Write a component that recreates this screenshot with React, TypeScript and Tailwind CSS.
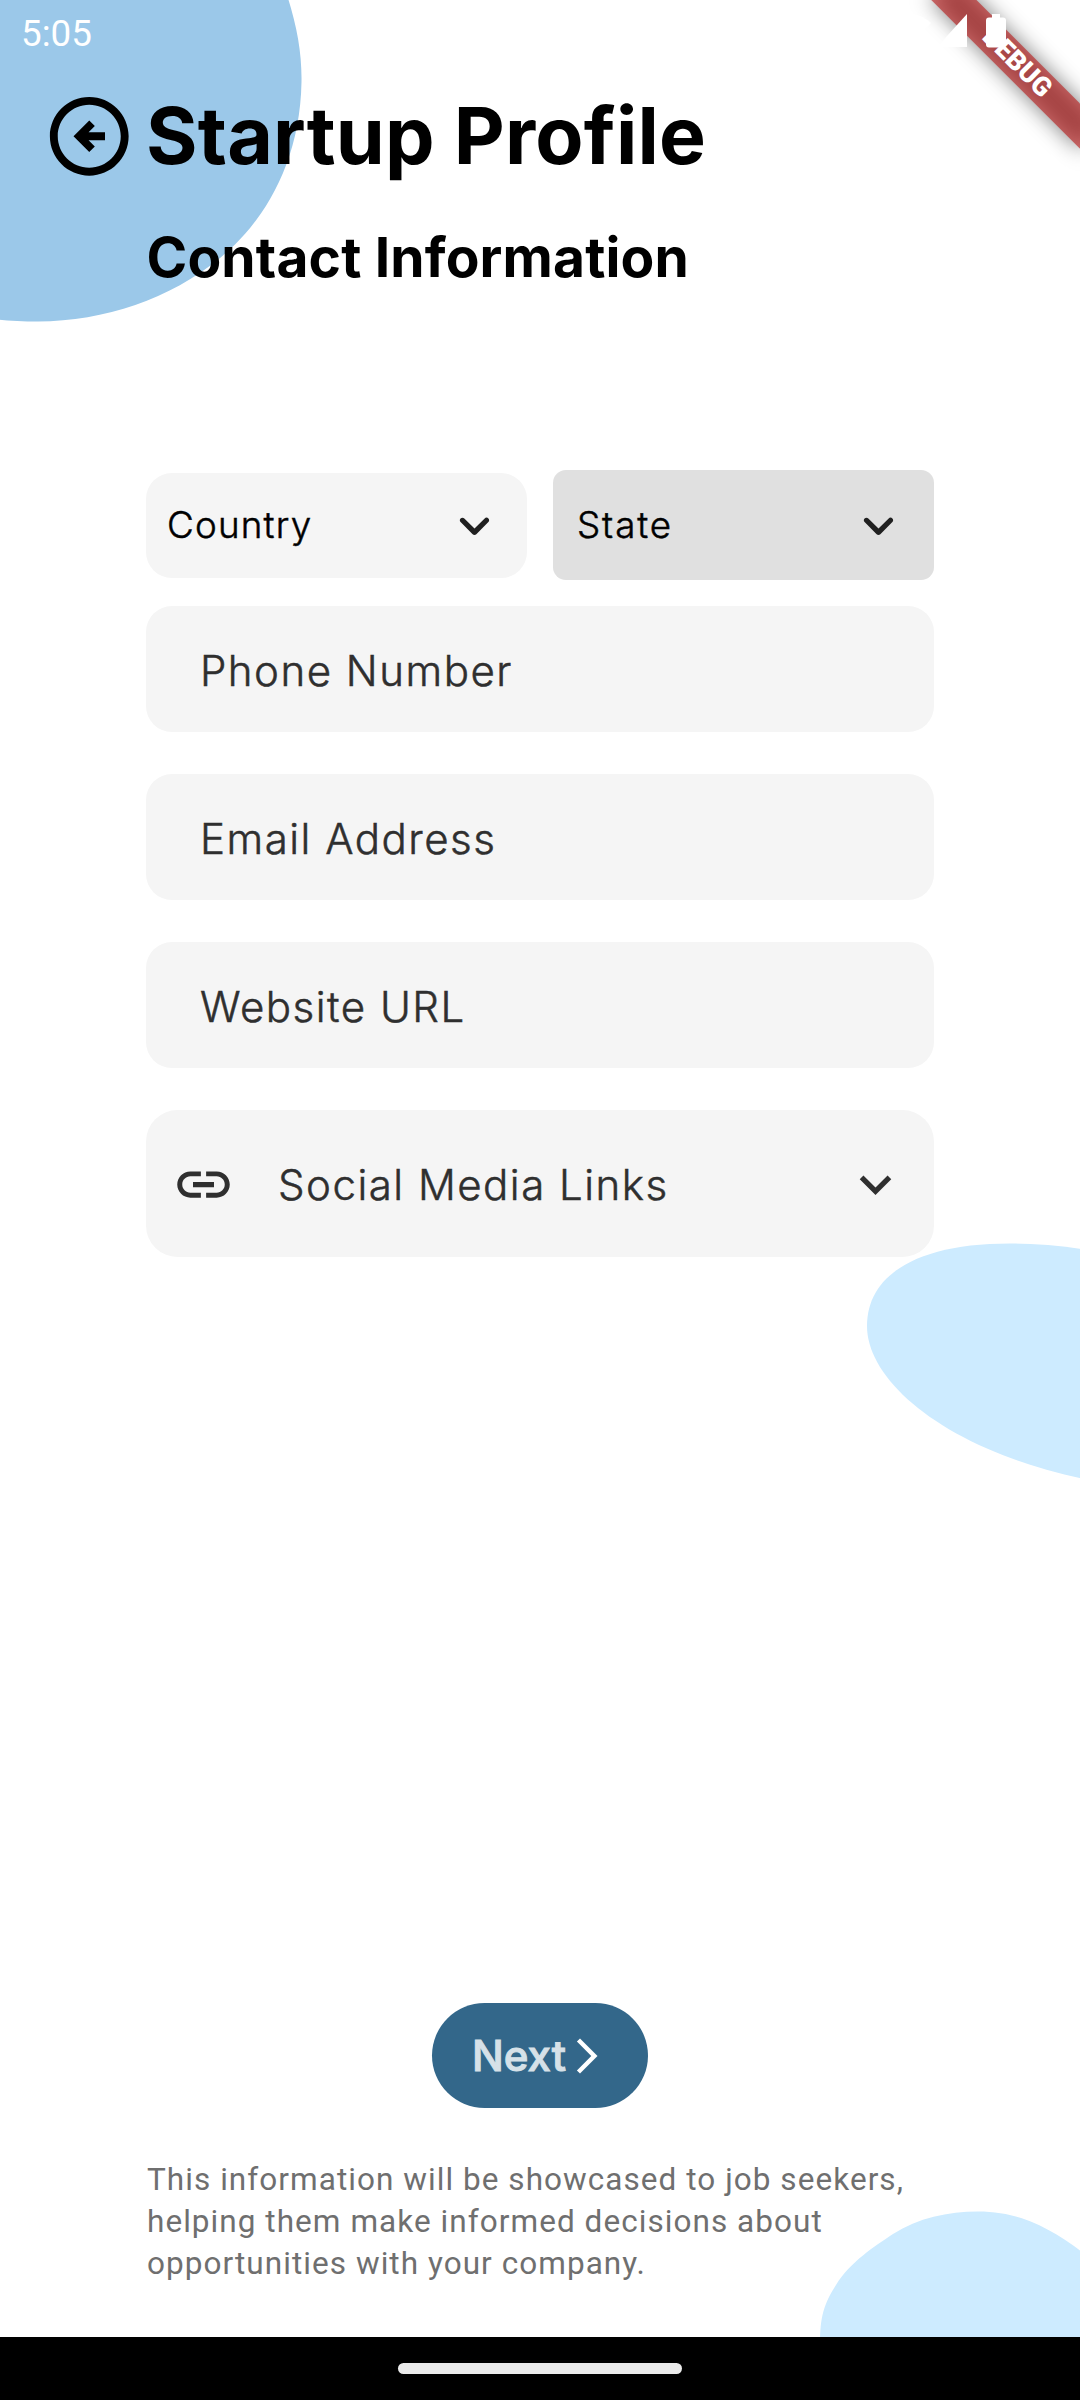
import type { ReactNode } from "react";

function BackgroundShapes() {
  return (
    <svg
      className="pointer-events-none absolute inset-0 h-[2400px] w-[1080px]"
      viewBox="0 0 1080 2400"
      aria-hidden="true"
    >
      <g className="blur-[0.7px]">
        <path
          fill="#9bc8e9"
          d="M-20 -20 H282 C296 20 302 50 301.5 82 C300 165 262 224 220 258 C170 299 105 321 38 321.5 C18 321.5 0 320.5 -20 317 Z"
        />
        <path
          fill="#cdebff"
          d="M1100 1252 C1070 1246.500 1040 1243.500 1010 1243.500 C915 1243.500 867 1276 867 1326 C867 1385 955 1456 1100 1482 Z"
        />
        <path
          fill="#cdebff"
          d="M820 2345 C820 2316 824 2304 836 2285 C850 2262 875 2246 893 2234 C918 2218 948 2211.500 978 2211.500 C1024 2211.500 1057 2231 1100 2266 V2345 Z"
        />
      </g>
    </svg>
  );
}

function DebugBanner() {
  return (
    <div className="pointer-events-none absolute top-0 right-0 h-[240px] w-[240px] overflow-hidden">
      <div className="absolute top-[47px] left-[72px] h-[31.500px] w-[210px] rotate-45">
        <div className="absolute inset-0 bg-black/50 blur-[10.400px]" />
        <div className="absolute inset-0 flex items-center justify-center bg-[#b71c1c]/63">
          <span className="font-[Roboto,sans-serif] text-[26.775px] leading-none font-black text-white">
            DEBUG
          </span>
        </div>
      </div>
    </div>
  );
}

function StatusBar() {
  return (
    <div className="absolute inset-x-0 top-0 h-[63px] text-white">
      <span className="absolute top-[12px] left-[21px] font-[Roboto,sans-serif] text-[36.750px] leading-[43px]">
        5:05
      </span>
      <svg className="absolute top-0 right-0 h-[63px] w-[200px]" viewBox="880 0 200 63" fill="currentColor">
        <path d="M909 47 L887 21 C900 11 918 11 931 23 Z" />
        <path d="M967 14 V47 H937 Z" />
        <path d="M992 14 h8 v3.500 h3 a3 3 0 0 1 3 3 v24 a3 3 0 0 1 -3 3 h-14 a3 3 0 0 1 -3 -3 v-24 a3 3 0 0 1 3 -3 h3 z" />
      </svg>
    </div>
  );
}

function RoundedChevron() {
  return (
    <svg className="size-[63px] shrink-0" viewBox="0 0 24 24" fill="#202020">
      <path d="M8.120 9.290 12 13.170l3.880-3.880c.39-.39 1.020-.39 1.410 0 .39.39.39 1.020 0 1.410l-4.590 4.590c-.39.39-1.020.39-1.410 0L6.700 10.700c-.39-.39-.39-1.020 0-1.410.39-.38 1.030-.39 1.420 0z" />
    </svg>
  );
}

function Field({ children }: { children: ReactNode }) {
  return (
    <div className="flex h-[126px] items-center rounded-[26px] bg-[#f5f5f5] pt-[3px] pl-[54px] text-[42px] font-light tracking-[1.500px] text-[#2f2f2f] [-webkit-text-stroke:0.500px_#2f2f2f]">
      {children}
    </div>
  );
}

export default function App() {
  return (
    <div className="relative flex h-[2400px] w-[1080px] flex-col overflow-hidden bg-white font-[Inter,sans-serif] text-black">
      <BackgroundShapes />

      <header className="relative flex flex-col pt-[88px] pl-[42px]">
        <div className="flex h-[96px] items-center">
          <svg className="size-[94.500px]" viewBox="0 0 24 24" fill="currentColor">
            <path d="M12 20c-4.410 0-8-3.590-8-8s3.590-8 8-8 8 3.590 8 8-3.590 8-8 8m0 2c5.520 0 10-4.480 10-10S17.520 2 12 2 2 6.480 2 12s4.480 10 10 10zm0-6 1.410-1.410L11.830 13H16v-2h-4.170l1.590-1.590L12 8l-4 4 4 4z" />
          </svg>
          <h1 className="ml-[9.500px] text-[78.750px] leading-[96px] font-bold tracking-[0.180px]">
            Startup Profile
          </h1>
        </div>
        <h2 className="mt-[40px] ml-[104.500px] text-[55.125px] leading-[67px] font-bold tracking-[0.150px]">
          Contact Information
        </h2>
      </header>

      <main className="relative mt-[179px] mr-[146.500px] ml-[146px] flex flex-col">
        <div className="flex items-center justify-between">
          <div className="flex h-[105px] w-[380.500px] items-center justify-between rounded-[26px] bg-[#f5f5f5] px-[21px] text-[36.750px] font-light tracking-[1.200px]">
            <span className="-mt-[2px] [-webkit-text-stroke:0.500px_#000]">Country</span>
            <RoundedChevron />
          </div>
          <div className="flex h-[110.250px] w-[381px] items-center justify-between rounded-[13px] bg-[#e0e0e0] pr-[23.500px] pl-[24.500px] text-[36.750px] font-light tracking-[1.900px]">
            <span className="-mt-[2px] [-webkit-text-stroke:0.500px_#000]">State</span>
            <RoundedChevron />
          </div>
        </div>

        <div className="mt-[26px] flex flex-col gap-[42px]">
          <Field>Phone Number</Field>
          <Field>Email Address</Field>
          <Field>Website URL</Field>
          <div className="flex h-[147px] items-center rounded-[31.500px] bg-[#f5f5f5] pt-[2px] pr-[26.500px] pl-[26px] text-[#2f2f2f]">
            <svg className="size-[63px]" viewBox="0 0 24 24" fill="currentColor">
              <path d="M3.900 12c0-1.710 1.390-3.100 3.100-3.100h4V7H7c-2.760 0-5 2.240-5 5s2.240 5 5 5h4v-1.900H7c-1.710 0-3.100-1.390-3.100-3.100zM8 13h8v-2H8v2zm9-6h-4v1.900h4c1.710 0 3.100 1.390 3.100 3.100s-1.390 3.100-3.100 3.100h-4V17h4c2.760 0 5-2.240 5-5s-2.240-5-5-5z" />
            </svg>
            <span className="ml-[43px] grow text-[42px] font-light tracking-[1.500px] [-webkit-text-stroke:0.500px_#2f2f2f]">
              Social Media Links
            </span>
            <svg className="size-[63px]" viewBox="0 0 24 24" fill="currentColor">
              <path d="M16.590 8.590 12 13.170 7.410 8.590 6 10l6 6 6-6z" />
            </svg>
          </div>
        </div>
      </main>

      <footer className="relative mt-[746px] flex flex-col items-center">
        <button className="flex h-[105px] w-[215.500px] items-center rounded-full bg-[#33678a] pl-[39.500px] text-[42px] font-medium text-[#d6e1e8]">
          <span className="w-[94.500px] [-webkit-text-stroke:1px_#d6e1e8]">Next</span>
          <svg className="size-[42px] shrink-0" viewBox="0 0 24 24" fill="#fff">
            <path d="M6.230 20.230 8 22l10-10L8 2 6.230 3.770 14.460 12z" />
          </svg>
        </button>
        <p className="mt-[51px] mr-auto ml-[147px] w-[787px] font-[Roboto,sans-serif] text-[31.500px] leading-[42px] tracking-[1.050px] text-[#6f6f6f]">
          This information will be showcased to job seekers,
          <br />
          helping them make informed decisions about
          <br />
          opportunities with your company.
        </p>
      </footer>

      <nav className="relative mt-auto flex h-[63px] shrink-0 items-center justify-center bg-black">
        <span className="h-[10.500px] w-[284px] rounded-full bg-[#ebebeb]" />
      </nav>

      <DebugBanner />
      <StatusBar />
    </div>
  );
}
